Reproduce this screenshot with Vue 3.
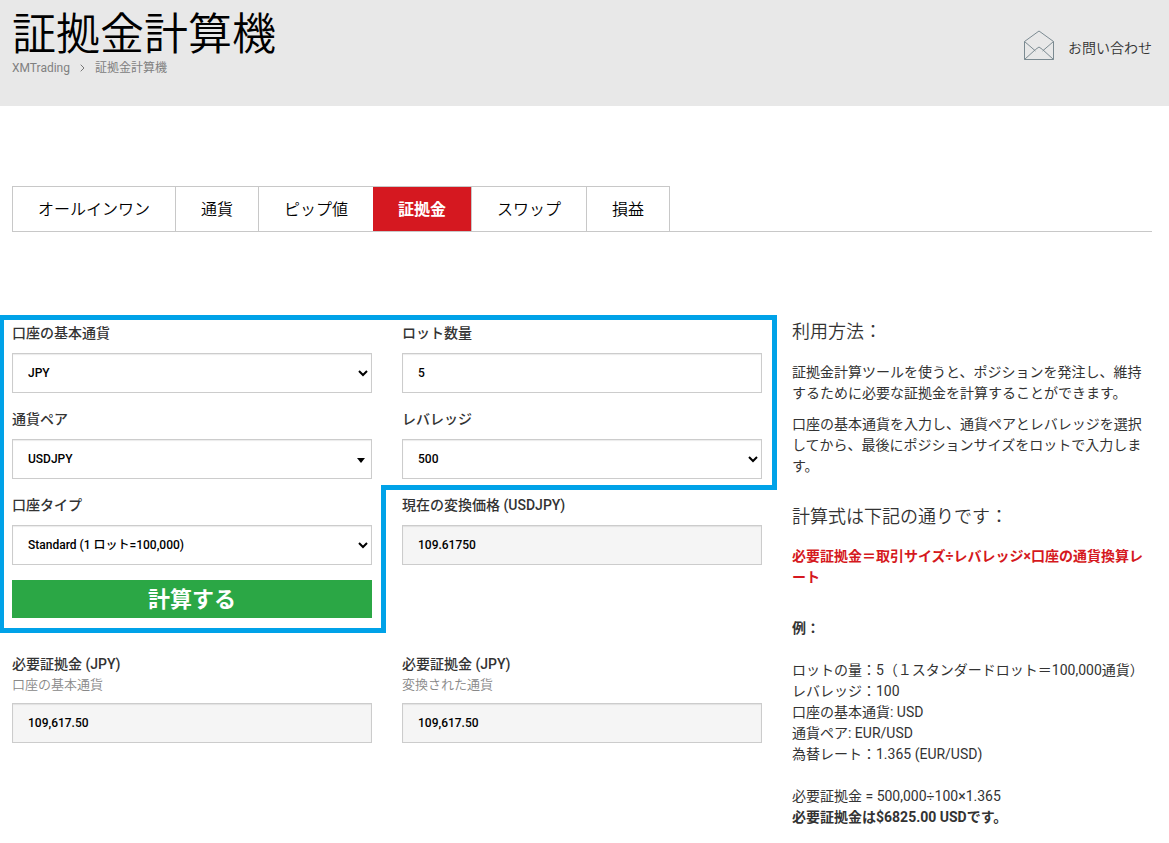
<script setup>
import { ref } from 'vue'

const tabs = ['オールインワン', '通貨', 'ピップ値', '証拠金', 'スワップ', '損益']
const active = ref(3)
const base = ref('JPY')
const lots = ref('5')
const pair = ref('USDJPY')
const leverage = ref('500')
const account = ref('Standard (1 ロット=100,000)')
const rate = ref('109.61750')
const marginBase = ref('109,617.50')
const marginConverted = ref('109,617.50')
</script>

<template>
  <div class="page">
    <header class="header">
      <div>
        <h1 class="title">証拠金計算機</h1>
        <nav class="crumbs">
          <a href="#">XMTrading</a>
          <svg class="crumb-arrow" viewBox="0 0 5 8"><path d="M.7.7 4 4 .7 7.3" /></svg>
          <span>証拠金計算機</span>
        </nav>
      </div>
      <a class="contact" href="#">
        <svg class="mail" viewBox="0 0 30 30">
          <path d="M.5 11.500 15 1l14.500 10.500v18H.5z" />
          <path d="M.5 11.500 11.500 21M29.500 11.500 18.500 21" />
          <path d="M.5 29.500 11.500 19.500 15 17l3.500 2.500 11 10" />
        </svg>
        <span>お問い合わせ</span>
      </a>
    </header>

    <nav class="tabs">
      <button
        v-for="(tab, i) in tabs"
        :key="tab"
        type="button"
        class="tab"
        :class="{ active: i === active, before: i === active - 1 }"
        @click="active = i"
      >{{ tab }}</button>
    </nav>

    <main class="main">
      <form class="form" @submit.prevent>
        <div class="inputs">
          <div class="column">
            <div class="field">
              <label for="base">口座の基本通貨</label>
              <select id="base" v-model="base" class="control"><option>JPY</option></select>
            </div>
            <div class="field">
              <label for="pair">通貨ペア</label>
              <div class="combo">
                <select id="pair" v-model="pair" class="control plain"><option>USDJPY</option></select>
                <svg class="caret" viewBox="0 0 8 5"><path d="M0 0h8L4 5z" /></svg>
              </div>
            </div>
            <div class="field">
              <label for="account">口座タイプ</label>
              <select id="account" v-model="account" class="control">
                <option>Standard (1 ロット=100,000)</option>
              </select>
            </div>
            <button type="submit" class="submit">計算する</button>
          </div>
          <div class="column">
            <div class="field">
              <label for="lots">ロット数量</label>
              <input id="lots" v-model="lots" class="control" type="text" />
            </div>
            <div class="field">
              <label for="leverage">レバレッジ</label>
              <select id="leverage" v-model="leverage" class="control"><option>500</option></select>
            </div>
            <div class="field">
              <label for="rate">現在の変換価格 (USDJPY)</label>
              <input id="rate" v-model="rate" class="control" type="text" readonly />
            </div>
          </div>
          <div class="outline" aria-hidden="true">
            <div class="outline-top"></div>
            <div class="outline-left"></div>
            <div class="outline-step"></div>
          </div>
        </div>
        <div class="results">
          <div class="field">
            <label for="margin-base">必要証拠金 (JPY)<small>口座の基本通貨</small></label>
            <input id="margin-base" v-model="marginBase" class="control" type="text" readonly />
          </div>
          <div class="field">
            <label for="margin-converted">必要証拠金 (JPY)<small>変換された通貨</small></label>
            <input id="margin-converted" v-model="marginConverted" class="control" type="text" readonly />
          </div>
        </div>
      </form>

      <aside class="help">
        <h2>利用方法：</h2>
        <p>証拠金計算ツールを使うと、ポジションを発注し、維持するために必要な証拠金を計算することができます。</p>
        <p>口座の基本通貨を入力し、通貨ペアとレバレッジを選択してから、最後にポジションサイズをロットで入力します。</p>
        <h2 class="formula-title">計算式は下記の通りです：</h2>
        <p class="formula">必要証拠金＝取引サイズ÷レバレッジ×口座の通貨換算レート</p>
        <p class="example"><strong>例：</strong></p>
        <p class="example">
          ロットの量：5（１スタンダードロット＝100,000通貨）<br />
          レバレッジ：100<br />
          口座の基本通貨: USD<br />
          通貨ペア: EUR/USD<br />
          為替レート：1.365 (EUR/USD)
        </p>
        <p class="example">
          必要証拠金 = 500,000÷100×1.365<br />
          <strong>必要証拠金は$6825.00 USDです。</strong>
        </p>
      </aside>
    </main>
  </div>
</template>

<style>
body {
  background: #fff;
}
</style>

<style scoped>
.page,
.page button,
.page input,
.page select {
  font-family: Roboto, "Noto Sans CJK JP", sans-serif;
}
.page {
  color: #333;
  font-size: 14px;
  line-height: 21px;
  font-weight: 400;
}
.page * {
  box-sizing: border-box;
}
a {
  color: inherit;
  text-decoration: none;
}
.header {
  display: flex;
  justify-content: space-between;
  align-items: flex-start;
  min-height: 106px;
  padding: 10px 17px 0 12px;
  background: #e8e8e8;
}
.title {
  margin: 0;
  padding-top: 2px;
  color: #000;
  font-size: 44px;
  line-height: 46px;
  font-weight: 350;
}
.crumbs {
  display: flex;
  align-items: center;
  color: #808080;
  font-size: 12px;
  line-height: 20px;
}
.crumb-arrow {
  width: 5px;
  height: 8px;
  margin: 0 10px;
  fill: none;
  stroke: #777;
}
.contact {
  display: flex;
  align-items: flex-end;
  gap: 14px;
  padding-top: 20px;
  line-height: 24px;
  font-weight: 350;
}
.mail {
  width: 30px;
  height: 30px;
  fill: none;
  stroke: #7b8a91;
}
.tabs {
  display: flex;
  margin: 80px 17px 0 12px;
  border-bottom: 1px solid #c8c8c8;
}
.tab {
  padding: 2px 25px 0;
  border: solid #c8c8c8;
  border-width: 1px 1px 0 0;
  background: #fff;
  color: #000;
  font-size: 16px;
  line-height: 42px;
  font-weight: 350;
}
.tab:first-child {
  border-left-width: 1px;
}
.tab.before {
  border-right-width: 0;
}
.tab.active {
  background: #d51820;
  color: #fff;
  font-weight: 700;
}
.main {
  display: grid;
  grid-template-columns: repeat(3, minmax(0, 1fr));
  column-gap: 30px;
  padding: 90px 17px 0 12px;
}
.form {
  grid-column: span 2;
}
.inputs,
.results {
  display: grid;
  grid-template-columns: repeat(2, minmax(0, 1fr));
  column-gap: 30px;
}
.inputs {
  position: relative;
}
.results {
  margin-top: 35px;
}
.column {
  display: flex;
  flex-direction: column;
  gap: 15px;
}
.field label {
  display: block;
  padding-top: 1px;
  margin-bottom: 9px;
  font-weight: 500;
}
.field small {
  display: block;
  color: #888;
  font-size: 13px;
  line-height: 19px;
  font-weight: 350;
}
.control {
  display: block;
  width: 100%;
  height: 40px;
  padding: 0 15px;
  border: 1px solid #ccc;
  border-radius: 0;
  background-color: #fff;
  box-shadow: inset 0 1px 1px rgba(0, 0, 0, 0.08);
  color: #000;
  font-size: 12px;
  font-weight: 500;
}
select.control {
  padding: 0 1px 0 11px;
}
.control[readonly] {
  background-color: #f5f5f5;
}
.combo {
  position: relative;
}
select.plain {
  appearance: none;
  padding: 0 15px;
}
.caret {
  position: absolute;
  right: 7px;
  top: 19px;
  width: 8px;
  height: 5px;
  fill: #000;
  pointer-events: none;
}
.submit {
  height: 38px;
  padding: 0 0 4px;
  border: 0;
  background: #2ba745;
  color: #fff;
  font-size: 22px;
  font-weight: 700;
}
.outline {
  position: absolute;
  inset: -7px -15px -15px -12px;
  display: grid;
  grid-template-columns: 386px 1fr;
  grid-template-rows: 170px 1fr;
  pointer-events: none;
}
.outline-top {
  grid-column: span 2;
  border: solid #00a2e8;
  border-width: 5px 5px 0 4px;
}
.outline-left {
  border: solid #00a2e8;
  border-width: 0 5px 5px 4px;
}
.outline-step {
  border-top: 5px solid #00a2e8;
}
.help p {
  margin: 0 0 10px;
}
.help h2 {
  margin: 0 0 20px;
  font-size: 18px;
  line-height: 20px;
  font-weight: 350;
}
.help .formula-title {
  margin: 30px 0 19px;
}
.help .formula {
  margin-bottom: 30px;
  color: #d51820;
  font-weight: 700;
}
.help .example {
  margin-bottom: 21px;
}
.help .example:last-child {
  margin-bottom: 0;
}
.help strong {
  font-weight: 700;
}
</style>
